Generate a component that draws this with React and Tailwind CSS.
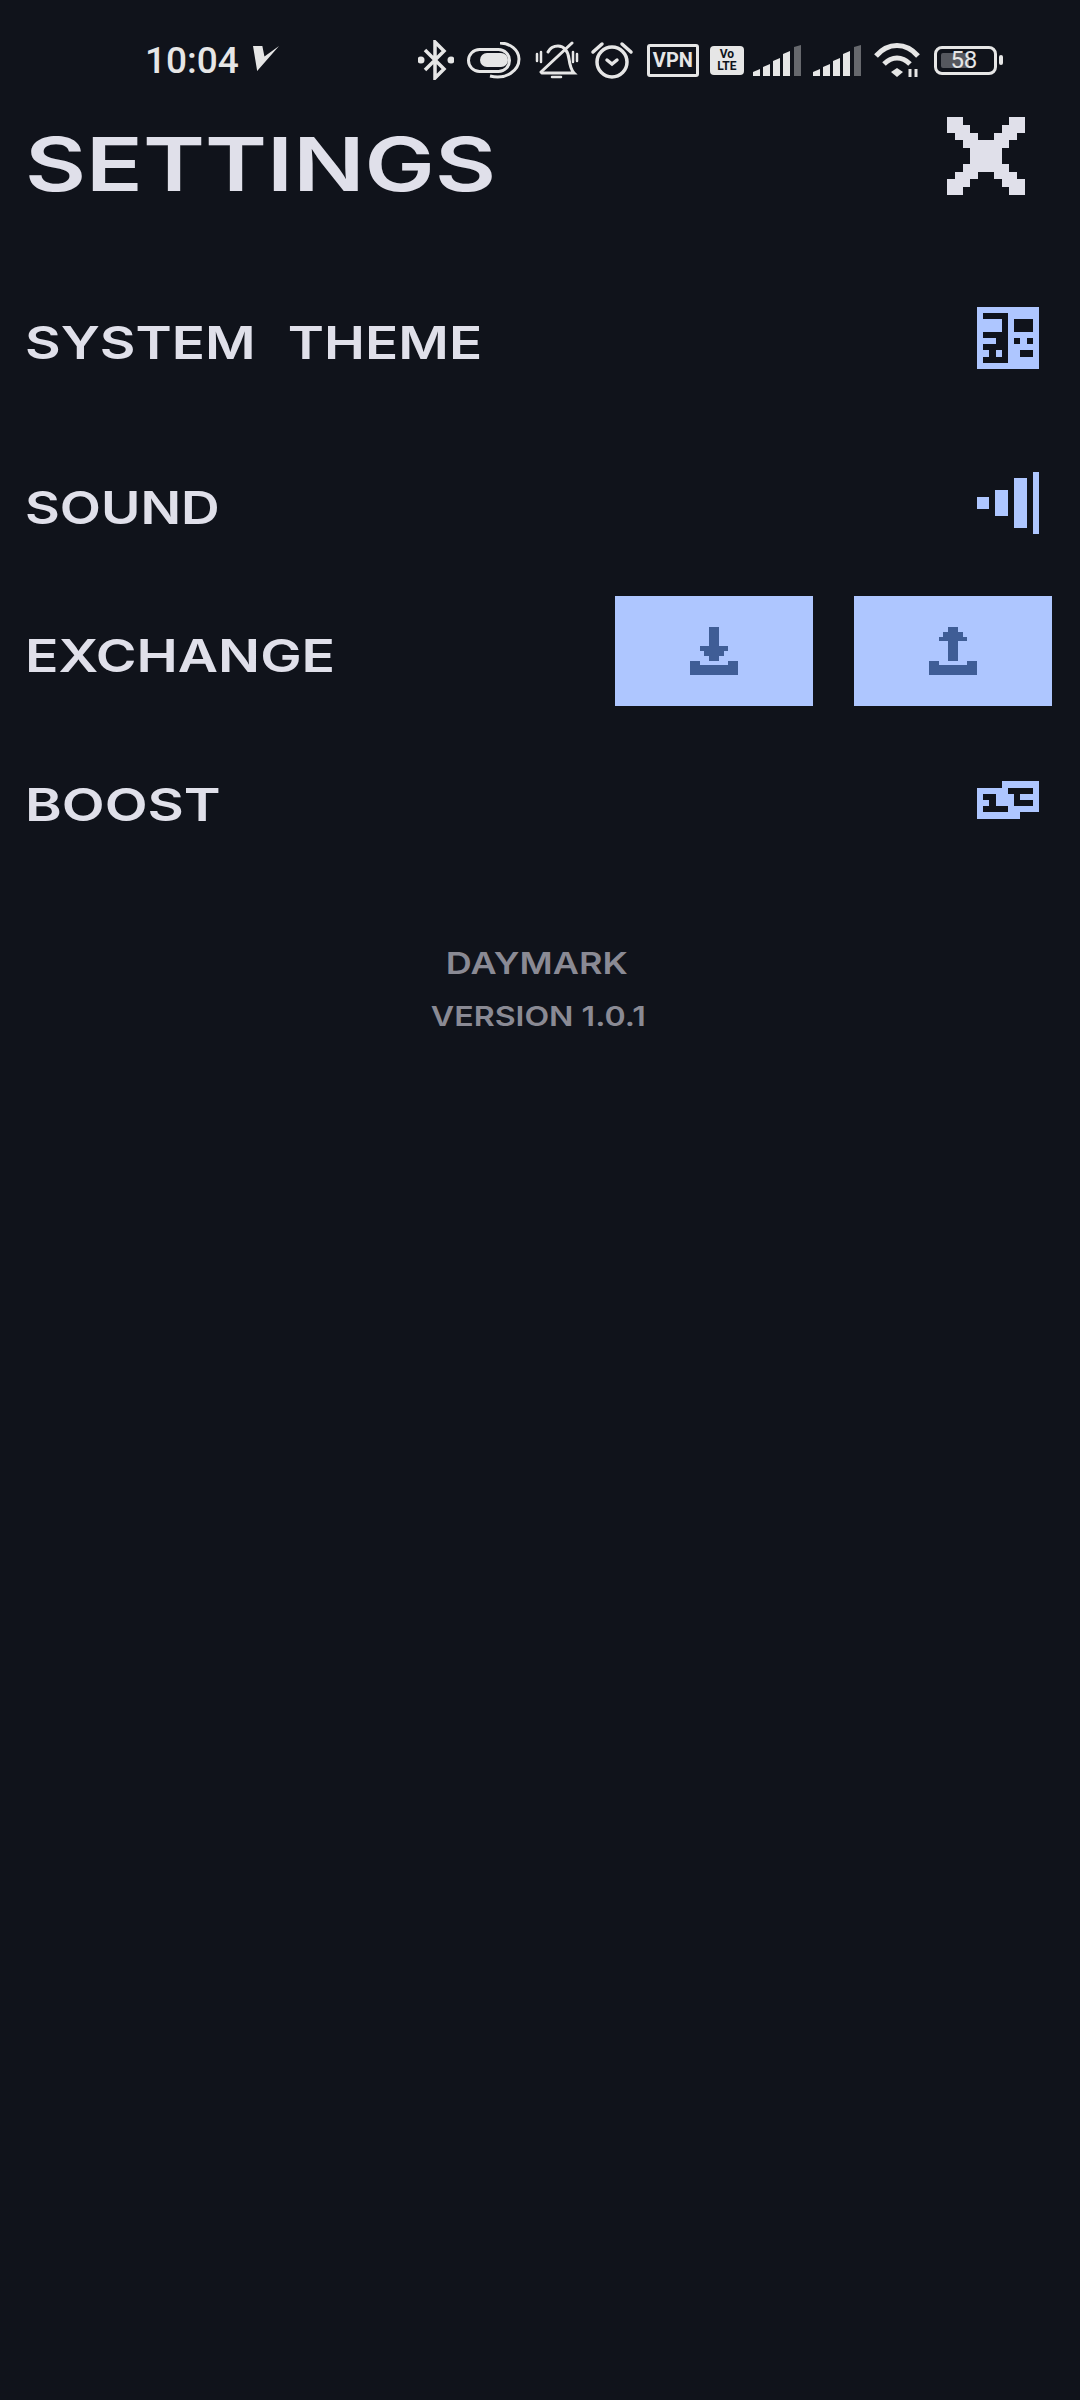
const pixels = (rows) =>
  rows.flatMap(([y, x1, x2]) => <rect key={`${y}-${x1}`} x={x1} y={y} width={x2 - x1 + 1} height={1} />);

const PixelIcon = ({ w, h, className, rows }) => (
  <svg viewBox={`0 0 ${w} ${h}`} className={className} fill="currentColor" shapeRendering="crispEdges">
    {pixels(rows)}
  </svg>
);

const closeRows = [
  [0, 0, 1], [0, 8, 9], [1, 0, 2], [1, 7, 9], [2, 1, 3], [2, 6, 8], [3, 2, 7], [4, 3, 6],
  [5, 3, 6], [6, 2, 7], [7, 1, 3], [7, 6, 8], [8, 0, 2], [8, 7, 9], [9, 0, 1], [9, 8, 9],
];

const baseRows = [[7, 0, 1], [7, 8, 9], [8, 0, 9], [9, 0, 9]];
const downloadRows = [[0, 4, 5], [1, 4, 5], [2, 4, 5], [3, 4, 5], [4, 2, 7], [5, 3, 6], [6, 4, 5], ...baseRows];
const uploadRows = [[0, 4, 5], [1, 3, 6], [2, 2, 7], [3, 4, 5], [4, 4, 5], [5, 4, 5], [6, 4, 5], ...baseRows];

const ThemeIcon = () => (
  <svg viewBox="0 0 10 10" className="w-[62px] h-[62px] mr-[13px]" shapeRendering="crispEdges">
    <rect width="10" height="10" fill="#aec6ff" />
    <g fill="#10131b">
      <rect x="1" y="1" width="4" height="1" />
      <rect x="4" y="2" width="1" height="2" />
      <rect x="1" y="4" width="4" height="1" />
      <rect x="3" y="5" width="2" height="1" />
      <rect x="1" y="6" width="4" height="1" />
      <rect x="2" y="7" width="1" height="1" />
      <rect x="4" y="7" width="1" height="1" />
      <rect x="1" y="8" width="4" height="1" />
      <rect x="6" y="2" width="3" height="2" />
      <rect x="6" y="5" width="1" height="1" />
      <rect x="8" y="5" width="1" height="1" />
      <rect x="7" y="7" width="2" height="1" />
    </g>
  </svg>
);

const SoundIcon = () => (
  <svg viewBox="0 0 62 62" className="w-[62px] h-[62px] mr-[13px]" fill="#aec6ff" shapeRendering="crispEdges">
    <rect x="0" y="25" width="12" height="12" />
    <rect x="18" y="18" width="13" height="26" />
    <rect x="37" y="6" width="13" height="50" />
    <rect x="56" y="0" width="6" height="62" />
  </svg>
);

const BoostIcon = () => (
  <svg viewBox="0 0 10 6" className="w-[62px] h-[38px] mr-[13px]" shapeRendering="crispEdges">
    <path fill="#aec6ff" d="M4 0H10V5H7V6H0V1H4Z" />
    <g fill="#10131b">
      <rect x="1" y="2" width="2" height="1" />
      <rect x="2" y="3" width="1" height="1" />
      <rect x="1" y="4" width="4" height="1" />
      <rect x="5" y="1" width="4" height="1" />
      <rect x="6" y="2" width="1" height="1" />
      <rect x="6" y="3" width="3" height="1" />
    </g>
  </svg>
);

const Label = ({ children, className }) => (
  <span className={`font-['Inter'] font-semibold text-[45px] leading-none text-[#e0e0ea] whitespace-nowrap origin-left mt-[9px] -ml-[3px] ${className}`}>
    {children}
  </span>
);

const SignalIcon = ({ className }) => (
  <svg viewBox="0 0 48 31" className={className} fill="#e6e6e6">
    <path d="M0 27l7-3v7H0z" />
    <path d="M10 22l7-3v12h-7z" />
    <path d="M20 16l7-3v18h-7z" />
    <path d="M30 9l7-3v25h-7z" />
    <path d="M41 2l7-2v31h-7z" fill="#66686d" />
  </svg>
);

const StatusBar = () => (
  <div className="h-[117px] pt-[3px] pl-[145px] flex items-center text-[#e6e6e6]">
    <span className="font-['Roboto'] font-medium text-[37px] leading-none">10:04</span>
    <svg viewBox="0 0 25 24" className="w-[26px] h-[25px] ml-[14px] mb-[3px]" fill="#e6e6e6">
      <path d="M0 0h9l2 10L25 0 4 24z" />
    </svg>
    <svg viewBox="0 0 36 40" className="w-[36px] h-[40px] ml-[139px]" fill="none" stroke="#e6e6e6" strokeWidth="3.5">
      <path d="M7 10l19 19-9 9V2l9 9L7 30" />
      <circle cx="3" cy="20" r="3.5" fill="#e6e6e6" stroke="none" />
      <circle cx="33" cy="20" r="3.5" fill="#e6e6e6" stroke="none" />
    </svg>
    <svg viewBox="0 0 54 37" className="w-[54px] h-[37px] ml-[13px]" fill="none" stroke="#e6e6e6" strokeWidth="3">
      <rect x="1.5" y="7.5" width="41" height="22" rx="11" />
      <rect x="13" y="11" width="28" height="14" rx="7" fill="#e6e6e6" stroke="none" />
      <path d="M33 1c10 0 19 7 19 16 0 11-12 21-29 17" />
    </svg>
    <svg viewBox="0 0 44 38" className="w-[44px] h-[38px] ml-[14px]" fill="none" stroke="#e6e6e6" strokeWidth="3" strokeLinecap="round">
      <path d="M37 2L6 31" />
      <path d="M7 32h32c-3-3-4-7-5-14-1-8-5-13-11-13-5 0-8 2-10 6" />
      <path d="M2 13v7M6 11v10M38 11v10M42 13v7" strokeWidth="2.5" />
      <path d="M17 36h9" strokeWidth="2.5" />
    </svg>
    <svg viewBox="0 0 44 38" className="w-[44px] h-[38px] ml-[11px]" fill="none" stroke="#e6e6e6" strokeWidth="3.5" strokeLinecap="round">
      <circle cx="22" cy="21" r="15" />
      <path d="M17 19l5 4 5-4" />
      <path d="M3 11l9-8M41 11l-9-8" />
    </svg>
    <div className="ml-[13px] w-[52px] h-[33px] border-[3px] border-[#e6e6e6] rounded-[3px] flex items-center justify-center font-['Roboto'] font-bold text-[20px] leading-none">
      VPN
    </div>
    <div className="ml-[11px] w-[34px] h-[29px] bg-[#e6e6e6] rounded-[4px] flex flex-col items-center justify-center font-['Roboto'] font-bold text-[#10131b] text-[12px] leading-[12px]">
      <span>Vo</span>
      <span>LTE</span>
    </div>
    <SignalIcon className="w-[48px] h-[31px] ml-[9px]" />
    <SignalIcon className="w-[48px] h-[31px] ml-[12px]" />
    <svg viewBox="0 0 46 35" className="w-[46px] h-[35px] ml-[13px]" fill="none" stroke="#e6e6e6" strokeWidth="5">
      <path d="M2 13c12-14 30-14 42 0" />
      <path d="M10 21c8-8 18-8 26 0" />
      <path d="M17 29l6-4 6 4-6 5z" fill="#e6e6e6" stroke="none" />
      <path d="M36 26v8M42 34v-8" strokeWidth="3" />
    </svg>
    <div className="relative ml-[14px] w-[63px] h-[29px] border-[3px] border-[#e6e6e6] rounded-[8px] flex items-center justify-center font-['Roboto'] text-[24px] leading-none">
      <div className="absolute left-[4px] top-[4px] w-[28px] h-[15px] bg-[#55575e] rounded-[2px]" />
      <span className="relative mr-[3px]">58</span>
    </div>
    <div className="ml-[2px] w-[4px] h-[10px] bg-[#e6e6e6] rounded-full" />
  </div>
);

export default function App() {
  return (
    <div className="w-[1080px] min-h-[2400px] bg-[#10131b]">
      <StatusBar />

      <div className="px-[28px]">
        <div className="h-[78px] flex items-center justify-between">
          <span className="font-['Inter'] font-semibold text-[74px] leading-none text-[#e0e0ea] origin-left scale-x-[1.27] mt-[16px] -ml-[3px]">
            SETTINGS
          </span>
          <PixelIcon w={10} h={10} rows={closeRows} className="w-[78px] h-[78px] mr-[27px] text-[#e0e0ea]" />
        </div>

        <div className="mt-[112px] h-[62px] flex items-center justify-between">
          <Label className="scale-x-[1.22] [word-spacing:15px]">SYSTEM THEME</Label>
          <ThemeIcon />
        </div>

        <div className="mt-[103px] h-[62px] flex items-center justify-between">
          <Label className="scale-x-[1.19]">SOUND</Label>
          <SoundIcon />
        </div>

        <div className="mt-[62px] h-[110px] flex items-center justify-between">
          <Label className="scale-x-[1.23]">EXCHANGE</Label>
          <div className="flex gap-[41px]">
            <button className="w-[198px] h-[110px] bg-[#aec6ff] flex items-center justify-center">
              <PixelIcon w={10} h={10} rows={downloadRows} className="w-[48px] h-[48px] text-[#3f5d96]" />
            </button>
            <button className="w-[198px] h-[110px] bg-[#aec6ff] flex items-center justify-center">
              <PixelIcon w={10} h={10} rows={uploadRows} className="w-[48px] h-[48px] text-[#3f5d96]" />
            </button>
          </div>
        </div>

        <div className="mt-[75px] h-[38px] flex items-center justify-between">
          <Label className="scale-x-[1.24]">BOOST</Label>
          <BoostIcon />
        </div>
      </div>

      <div className="mt-[129px] flex flex-col items-center font-['Inter'] font-semibold text-[#8a8a94] leading-none">
        <span className="text-[30px] scale-x-[1.2] translate-x-[-3px]">DAYMARK</span>
        <span className="text-[27px] mt-[25px] scale-x-[1.19] translate-x-[-2px] whitespace-nowrap">VERSION 1.0.1</span>
      </div>
    </div>
  );
}
